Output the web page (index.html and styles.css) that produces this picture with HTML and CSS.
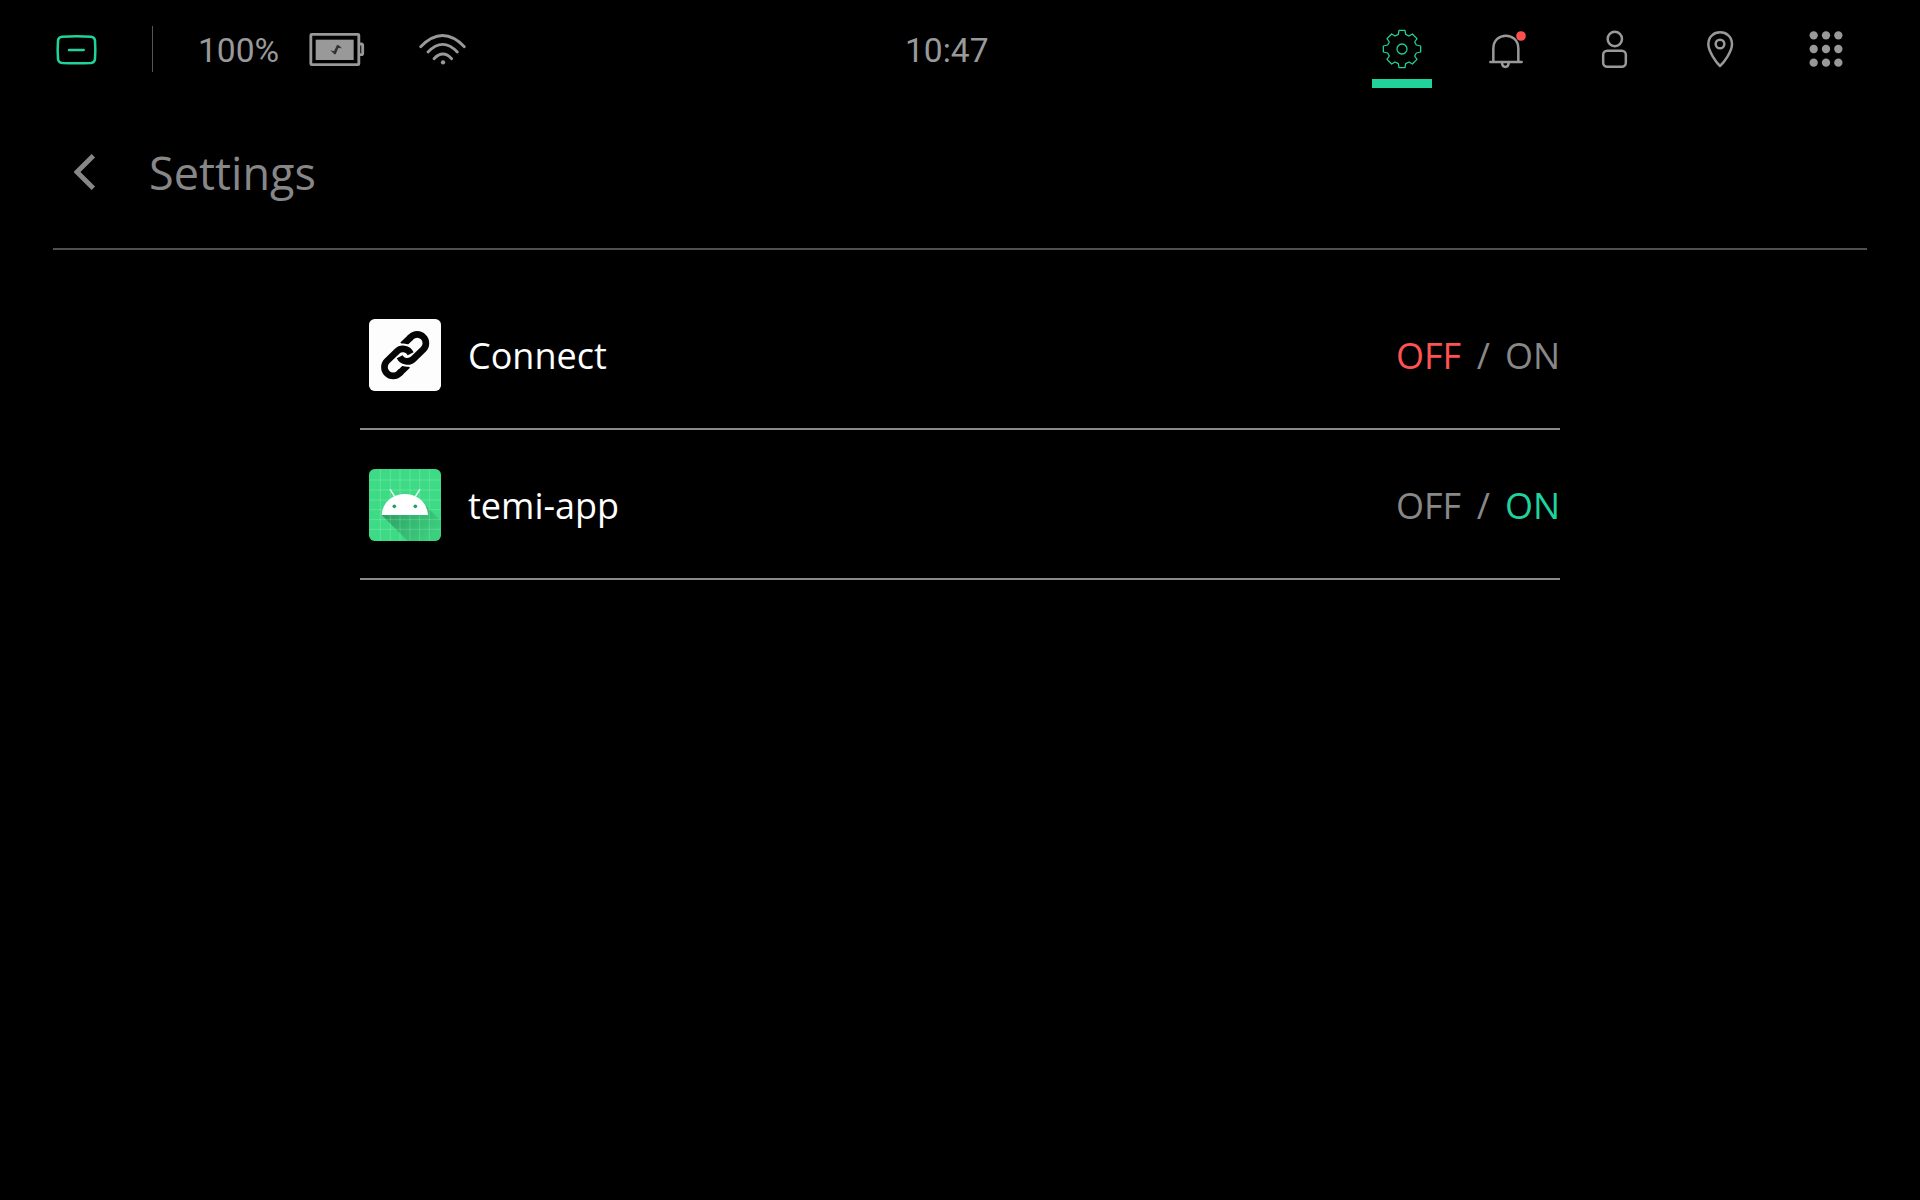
FILE: index.html
```html
<!DOCTYPE html>
<html lang="en">
<head>
<meta charset="utf-8">
<title>Settings</title>
<link rel="stylesheet" href="styles.css">
</head>
<body>
<header class="status-bar">
  <svg class="icon robot" viewBox="18 0 180 180" aria-hidden="true"><path d="M67 50Q110 47 153 50Q164 51 165 62Q167 90 165 117Q164 128 153 129Q110 131 67 129Q55 128 54 117Q52 90 54 62Q55 51 67 50ZM87 90H131"/></svg>
  <span class="divider"></span>
  <span class="battery-level">100%</span>
  <svg class="battery" viewBox="30 0 216 180" aria-hidden="true">
    <rect class="line" x="62.500" y="43" width="144" height="91" rx="3"/>
    <path class="line" d="M208 72H216L218 74V102L216 104H208"/>
    <rect class="fill" x="77" y="59" width="114" height="61"/>
    <path class="bolt" d="M121 91L132 94L141 75H145L156 85L145 84L137 103H133Z"/>
  </svg>
  <svg class="icon wifi" viewBox="366 0 180 180" aria-hidden="true"><path class="line" d="M392 80Q458 13 523 80M414 96Q458 50 502 96M432 116Q459 88 485 116"/><circle class="fill" cx="459" cy="127" r="6.500"/></svg>
  <time class="clock">10:47</time>
  <nav class="tabs">
    <a class="tab active"><svg class="icon gear" viewBox="36 0 180 180" aria-hidden="true"><g transform="translate(126 87)"><path d="M-9-56H9L11-44L21-39L31-45L45-31L38-21L43-12L56-9V9L43 12L38 21L45 31L31 45L21 39L11 44L9 56H-9L-11 44L-21 39L-31 45L-45 31L-38 21L-43 12L-56 9V-9L-43-12L-38-21L-45-31L-31-45L-21-39L-11-44Z"/><circle r="15"/></g></svg></a>
    <a class="tab"><svg class="icon" viewBox="354 0 180 180" aria-hidden="true"><path class="line" d="M400 125V86C400 34 475 34 475 86V125M391 126H485M426 129C427 145 445 145 446 129"/><circle class="alert" cx="483" cy="48" r="14.500"/></svg></a>
    <a class="tab"><svg class="icon" viewBox="12 0 180 180" aria-hidden="true"><circle class="line" cx="104.500" cy="57" r="21.500"/><rect class="line" x="69.500" y="92.500" width="68" height="48" rx="12"/></svg></a>
    <a class="tab"><svg class="icon" viewBox="330 0 180 180" aria-hidden="true"><path class="line" d="M420 138C408 126 385 94 385 73C385 25 456 25 456 73C456 94 433 126 420 138Z"/><circle class="line" cx="420" cy="72" r="13"/></svg></a>
    <a class="tab"><svg class="icon" viewBox="648 0 180 180" aria-hidden="true"><g class="fill"><circle cx="701" cy="46" r="12.500"/><circle cx="738" cy="46" r="12.500"/><circle cx="775" cy="46" r="12.500"/><circle cx="701" cy="87" r="12.500"/><circle cx="738" cy="87" r="12.500"/><circle cx="775" cy="87" r="12.500"/><circle cx="701" cy="128" r="12.500"/><circle cx="738" cy="128" r="12.500"/><circle cx="775" cy="128" r="12.500"/></g></svg></a>
  </nav>
</header>
<div class="title-bar">
  <svg class="back" viewBox="0 0 66 108" aria-hidden="true"><path d="M58 5L9 54L58 103"/></svg>
  <h1>Settings</h1>
</div>
<main class="apps">
  <div class="app">
    <svg class="app-icon" viewBox="57 27 216 216" aria-hidden="true"><rect x="57" y="27" width="216" height="216" rx="17" fill="#fdfdfd"/><g class="chain"><path d="M158 105L183 81M173 166L148 190"/><path class="gap" d="M141 124A26 26 0 0 1 176 121M190 147A26 26 0 0 1 155 150"/><path d="M178 86L183 81A26 26 0 0 1 220 118L190 147A26 26 0 0 1 149 140"/><path d="M153 185L148 190A26 26 0 0 1 111 153L141 124A26 26 0 0 1 182 131"/></g></svg>
    <span class="name">Connect</span>
    <span class="switch"><span class="off selected">OFF</span><span class="slash">/</span><span class="on">ON</span></span>
  </div>
  <div class="app">
    <svg class="app-icon" viewBox="57 27 216 216" aria-hidden="true">
      <defs><linearGradient id="shade" gradientUnits="userSpaceOnUse" x1="130" y1="145" x2="230" y2="245"><stop offset="0" stop-opacity=".26"/><stop offset="1" stop-opacity=".05"/></linearGradient></defs>
      <rect x="57" y="27" width="216" height="216" rx="17" fill="#3ddb85"/>
      <path d="M95 165L173 243H256Q273 243 273 226V183L226 136Z" fill="url(#shade)"/>
      <path class="mesh" d="M91 27V243M121 27V243M150 27V243M180 27V243M209 27V243M238 27V243M57 60H273M57 90H273M57 120H273M57 149H273M57 179H273M57 208H273"/>
      <path d="M95 165C101 81 228 81 234 165Z" fill="#fff"/>
      <path class="antenna" d="M121 89L134 110M209 89L196 110"/>
      <circle cx="133" cy="139" r="5.500" fill="#249e62"/><circle cx="196" cy="139" r="5.500" fill="#249e62"/>
    </svg>
    <span class="name">temi-app</span>
    <span class="switch"><span class="off">OFF</span><span class="slash">/</span><span class="on selected">ON</span></span>
  </div>
</main>
</body>
</html>
```
FILE: styles.css
```css
* { box-sizing: border-box; }
body {
  margin: 0;
  height: 1200px;
  overflow: hidden;
  background: #000;
  color: #fff;
  font-family: "Open Sans", "Noto Sans", sans-serif;
}
svg { display: block; flex: none; }

.status-bar {
  display: flex;
  align-items: center;
  height: 100px;
  padding: 0 64px 0 46px;
  color: #999;
  font: 33.6px/40px Roboto, sans-serif;
}
.icon { width: 60px; height: 60px; }
.line { fill: none; stroke: #999; stroke-width: 7.5; stroke-linecap: round; stroke-linejoin: round; }
.fill { fill: #999; }
.robot, .gear { fill: none; stroke: #20d39b; stroke-linecap: round; stroke-linejoin: round; }
.robot { stroke-width: 7.5; }
.gear { stroke-width: 3.8; }
.divider { width: 1px; height: 46px; margin: 0 45px 2px 46px; background: #555; }
.battery-level { width: 102px; padding-top: 2px; }
.battery { width: 72px; height: 60px; }
.battery .line { stroke-width: 8.5; }
.bolt { fill: #333; }
.wifi { margin-left: 40px; }
.wifi .line { stroke-width: 8.5; }
.clock { margin-left: 433px; padding-top: 2px; }
.tabs { display: flex; gap: 46px; margin-left: auto; }
.tab { position: relative; }
.tab.active::after {
  content: "";
  position: absolute;
  left: 0;
  top: 59px;
  width: 60px;
  height: 9px;
  background: #20d39b;
}
.alert { fill: #ff4f4f; }

.title-bar {
  display: flex;
  align-items: center;
  height: 150px;
  margin: 0 53px;
  padding: 0 0 3px 21px;
  border-bottom: 2px solid #505050;
  color: #878787;
}
.back { width: 22px; height: 36px; margin-bottom: 1px; fill: none; stroke: #878787; stroke-width: 14.5; }
h1 { margin: 0 0 0 53px; font-size: 45px; line-height: 64px; font-weight: 400; }

.apps { width: 1200px; margin: 30px auto 0; }
.app {
  display: flex;
  align-items: center;
  height: 150px;
  padding: 2px 0 0 9px;
  border-bottom: 2px solid #8a8a8a;
  font-size: 36px;
  line-height: 50px;
}
.app-icon { width: 72px; height: 72px; }
.chain { fill: none; stroke: #050505; stroke-width: 20; }
.chain .gap { stroke: #fdfdfd; stroke-width: 30; }
.mesh { fill: none; stroke: #fff; stroke-width: 2.5; opacity: .22; }
.antenna { fill: none; stroke: #e9fbf1; stroke-width: 4.5; stroke-linecap: round; }
.name { margin-left: 27px; padding-top: 2px; }
.switch { display: flex; margin-left: auto; padding-top: 2px; color: #888; }
.slash { margin: 0 15px 0 15.500px; }
.off.selected { color: #ff5252; }
.on.selected { color: #20d39b; }
```
